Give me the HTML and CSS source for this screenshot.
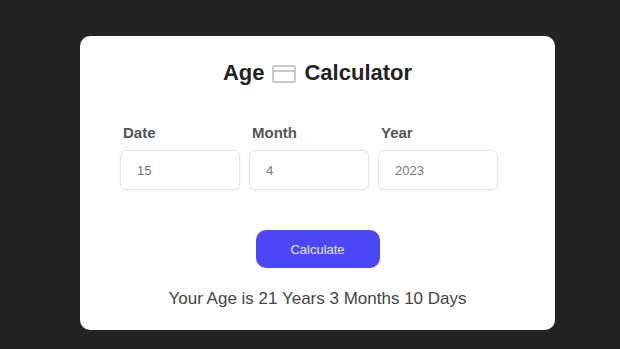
FILE: index.html
```html
<!DOCTYPE html>
<html>
<head>
<meta charset="utf-8">
<link rel="stylesheet" href="styles.css">
</head>
<body>
<div class="card">
  <h1 class="title">Age <span class="icon"><svg width="28" height="22" viewBox="0 0 28 22"><rect x="3" y="4" width="22" height="16" rx="2" fill="none" stroke="#c8c8c8" stroke-width="2"/><line x1="3" y1="9" x2="25" y2="9" stroke="#c8c8c8" stroke-width="2"/></svg></span> Calculator</h1>
  <div class="fields">
    <div class="field">
      <label class="label">Date</label>
      <input class="input" type="text" value="15">
    </div>
    <div class="field">
      <label class="label">Month</label>
      <input class="input" type="text" value="4">
    </div>
    <div class="field">
      <label class="label">Year</label>
      <input class="input" type="text" value="2023">
    </div>
  </div>
  <button class="btn">Calculate</button>
  <p class="result">Your Age is 21 Years 3 Months 10 Days</p>
</div>
</body>
</html>
```
FILE: styles.css
```css
html, body {
  margin: 0;
  padding: 0;
}
body {
  background: #232323;
  font-family: "Liberation Sans", Arial, sans-serif;
  width: 620px;
  height: 349px;
  overflow: hidden;
  padding-top: 36px;
  box-sizing: border-box;
}
.card {
  width: 475px;
  height: 294px;
  margin-left: 80px;
  background: #fff;
  border-radius: 10px;
  box-sizing: border-box;
  padding: 22px 40px 0 40px;
  display: flex;
  flex-direction: column;
  align-items: center;
}
.title {
  margin: 0;
  font-size: 22px;
  font-weight: 700;
  color: #222;
  display: flex;
  align-items: center;
  gap: 6px;
  height: 30px;
}
.icon {
  display: inline-flex;
}
.fields {
  margin-top: 36px;
  display: grid;
  grid-template-columns: repeat(3, 120px);
  column-gap: 9px;
  width: 100%;
}
.field {
  display: flex;
  flex-direction: column;
}
.label {
  font-size: 15px;
  font-weight: 700;
  color: #555;
  margin-left: 3px;
  margin-bottom: 9px;
}
.input {
  height: 40px;
  border: 1px solid #e6e6e6;
  border-radius: 6px;
  box-sizing: border-box;
  padding: 0 16px;
  font-family: "Liberation Sans", Arial, sans-serif;
  font-size: 13px;
  color: #777;
  background: #fff;
  box-shadow: 0 1px 3px rgba(0,0,0,0.06);
  width: 100%;
  outline: none;
}
.btn {
  margin-top: 40px;
  width: 124px;
  height: 38px;
  background: #4b47f6;
  color: #e8e8ff;
  border: none;
  border-radius: 10px;
  font-family: "Liberation Sans", Arial, sans-serif;
  font-size: 13px;
}
.result {
  margin: 21px 0 0 0;
  font-size: 17px;
  color: #444;
}
```
